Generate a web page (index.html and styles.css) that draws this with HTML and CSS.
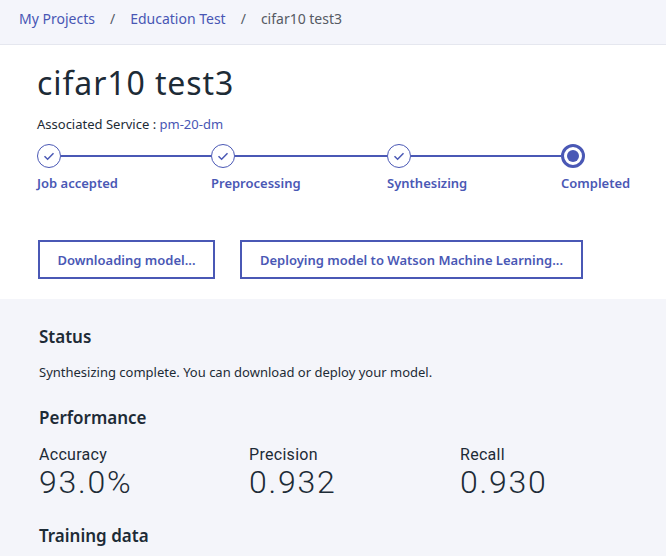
FILE: index.html
```html
<!DOCTYPE html>
<html>
<head>
<meta charset="utf-8">
<link rel="stylesheet" href="styles.css">
</head>
<body>
<nav class="crumbs">
  <a class="crumb-link">My Projects</a>
  <span class="sep">/</span>
  <a class="crumb-link">Education Test</a>
  <span class="sep">/</span>
  <span class="crumb-current">cifar10 test3</span>
</nav>
<section class="header">
  <h1 class="title">cifar10 test3</h1>
  <div class="service">Associated Service : <a class="service-link">pm-20-dm</a></div>
  <div class="stepper">
    <div class="step">
      <div class="track">
        <span class="circle"><svg width="14" height="14" viewBox="0 0 14 14"><path d="M2.5 7.2 L5.6 10.2 L11.5 4.2" fill="none" stroke="#4a58b5" stroke-width="1.5"/></svg></span>
        <span class="line"></span>
      </div>
      <div class="label">Job accepted</div>
    </div>
    <div class="step">
      <div class="track">
        <span class="circle"><svg width="14" height="14" viewBox="0 0 14 14"><path d="M2.5 7.2 L5.6 10.2 L11.5 4.2" fill="none" stroke="#4a58b5" stroke-width="1.5"/></svg></span>
        <span class="line"></span>
      </div>
      <div class="label">Preprocessing</div>
    </div>
    <div class="step">
      <div class="track">
        <span class="circle"><svg width="14" height="14" viewBox="0 0 14 14"><path d="M2.5 7.2 L5.6 10.2 L11.5 4.2" fill="none" stroke="#4a58b5" stroke-width="1.5"/></svg></span>
        <span class="line"></span>
      </div>
      <div class="label">Synthesizing</div>
    </div>
    <div class="step">
      <div class="track">
        <span class="circle current"><span class="dot"></span></span>
      </div>
      <div class="label">Completed</div>
    </div>
  </div>
  <div class="actions">
    <button class="btn btn-download">Downloading model...</button>
    <button class="btn btn-deploy">Deploying model to Watson Machine Learning...</button>
  </div>
</section>
<section class="details">
  <h2 class="heading">Status</h2>
  <p class="status-text">Synthesizing complete. You can download or deploy your model.</p>
  <h2 class="heading perf">Performance</h2>
  <div class="metrics">
    <div class="metric"><div class="metric-label">Accuracy</div><div class="metric-value">93.0%</div></div>
    <div class="metric"><div class="metric-label">Precision</div><div class="metric-value">0.932</div></div>
    <div class="metric"><div class="metric-label">Recall</div><div class="metric-value">0.930</div></div>
  </div>
  <h2 class="heading training">Training data</h2>
</section>
</body>
</html>
```
FILE: styles.css
```css
* { box-sizing: border-box; }
html, body { margin: 0; padding: 0; }
body {
  font-family: "Noto Sans", "Liberation Sans", sans-serif;
  color: #1d2b36;
  background: #f4f5fa;
  width: 666px;
  height: 556px;
  overflow: hidden;
}
.crumbs {
  height: 45px;
  background: #f4f5fb;
  border-bottom: 1px solid #e5e7ef;
  display: flex;
  align-items: center;
  padding-left: 19px;
  font-size: 14px;
  padding-bottom: 7px;
}
.crumb-link { color: #4856b4; }
.sep { color: #555b66; margin: 0 15px; }
.crumb-current { color: #565a63; }
.header {
  background: #ffffff;
  padding: 18px 37px 20px;
}
.title {
  margin: 0;
  font-size: 32px;
  line-height: 40px;
  font-weight: 400;
  letter-spacing: 0.9px;
  color: #1d2b36;
}
.service {
  margin-top: 12px;
  font-size: 13px;
  line-height: 18px;
  color: #1d2b36;
}
.service-link { color: #4856b4; }
.stepper {
  margin-top: 11px;
  display: grid;
  grid-template-columns: 174px 176px 174px 80px;
}
.track {
  display: flex;
  align-items: center;
  height: 24px;
}
.circle {
  width: 24px;
  height: 24px;
  flex: none;
  border: 1.5px solid #4a58b5;
  border-radius: 50%;
  display: flex;
  align-items: center;
  justify-content: center;
  background: #fff;
}
.circle.current { border-width: 3px; }
.dot {
  width: 12px;
  height: 12px;
  border-radius: 50%;
  background: #4a58b5;
}
.line {
  flex: 1;
  height: 2px;
  background: #4a58b5;
}
.label {
  margin-top: 6px;
  font-size: 13px;
  line-height: 18px;
  font-weight: 600;
  color: #4a58b5;
  white-space: nowrap;
}
.actions {
  margin-top: 48px;
  margin-left: 1px;
  display: flex;
  gap: 25px;
}
.btn {
  height: 39px;
  border: 2px solid #4a58b5;
  background: #fff;
  color: #4a58b5;
  font-family: inherit;
  font-size: 13px;
  font-weight: 600;
  padding: 0 12px;
  white-space: nowrap;
}
.btn-download { width: 177px; }
.btn-deploy { width: 343px; }
.details {
  padding: 27px 39px 0;
}
.heading {
  margin: 0;
  font-size: 17px;
  line-height: 22px;
  font-weight: 600;
  color: #1d2b36;
}
.status-text {
  margin: 15px 0 0;
  font-size: 13px;
  line-height: 18px;
}
.heading.perf { margin-top: 26px; }
.metrics {
  margin-top: 16px;
  display: grid;
  grid-template-columns: 210px 211px 210px;
}
.metric-label {
  font-family: Roboto, "Noto Sans", sans-serif;
  font-size: 16px;
  line-height: 20px;
  letter-spacing: 0.3px;
}
.metric-value {
  font-family: Roboto, "Noto Sans", sans-serif;
  font-size: 32px;
  line-height: 34px;
  font-weight: 300;
  letter-spacing: 1.8px;
}
.heading.training { margin-top: 26px; }
```
